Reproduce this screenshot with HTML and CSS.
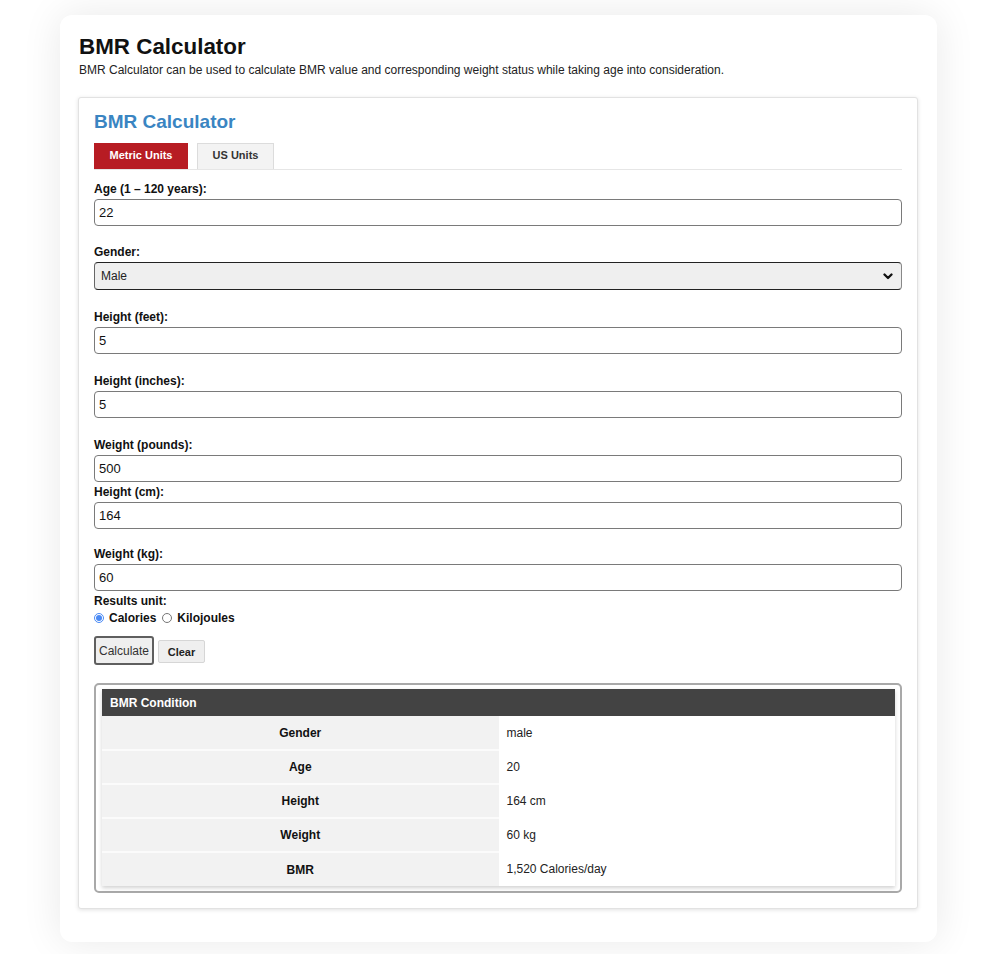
FILE: index.html
```html
<!DOCTYPE html>
<html lang="en">
<head>
<meta charset="utf-8">
<title>BMR Calculator</title>
<link rel="stylesheet" href="styles.css">
</head>
<body>
<div class="card">
  <h1 class="page-title">BMR Calculator</h1>
  <p class="page-desc">BMR Calculator can be used to calculate BMR value and corresponding weight status while taking age into consideration.</p>

  <div class="panel">
    <h2 class="panel-title">BMR Calculator</h2>
    <div class="tabs">
      <span class="tab tab-active">Metric Units</span>
      <span class="tab">US Units</span>
    </div>

    <div class="field field-age">
      <label class="field-label">Age (1 – 120 years):</label>
      <input class="text-input" type="text" value="22">
    </div>

    <div class="field">
      <label class="field-label">Gender:</label>
      <div class="select">
        <span>Male</span>
        <svg class="chev" width="10" height="7" viewBox="0 0 10 7"><path d="M1.5 1.5 L5 5 L8.5 1.5" fill="none" stroke="#111" stroke-width="2.3" stroke-linecap="round" stroke-linejoin="round"/></svg>
      </div>
    </div>

    <div class="field">
      <label class="field-label">Height (feet):</label>
      <input class="text-input" type="text" value="5">
    </div>

    <div class="field">
      <label class="field-label">Height (inches):</label>
      <input class="text-input" type="text" value="5">
    </div>

    <div class="field field-tight">
      <label class="field-label">Weight (pounds):</label>
      <input class="text-input" type="text" value="500">
    </div>

    <div class="field field-cm">
      <label class="field-label">Height (cm):</label>
      <input class="text-input" type="text" value="164">
    </div>

    <div class="field field-tight">
      <label class="field-label">Weight (kg):</label>
      <input class="text-input" type="text" value="60">
    </div>

    <div class="units">
      <div class="field-label">Results unit:</div>
      <div class="radios">
        <label class="radio"><input type="radio" name="u" checked>Calories</label>
        <label class="radio"><input type="radio" name="u">Kilojoules</label>
      </div>
    </div>

    <div class="buttons">
      <button class="btn btn-calc" type="button">Calculate</button>
      <button class="btn btn-clear" type="button">Clear</button>
    </div>

    <div class="results">
      <table class="result-table">
        <thead>
          <tr><th colspan="2">BMR Condition</th></tr>
        </thead>
        <tbody>
          <tr><td class="key">Gender</td><td class="val">male</td></tr>
          <tr><td class="key">Age</td><td class="val">20</td></tr>
          <tr><td class="key">Height</td><td class="val">164 cm</td></tr>
          <tr><td class="key">Weight</td><td class="val">60 kg</td></tr>
          <tr><td class="key">BMR</td><td class="val">1,520 Calories/day</td></tr>
        </tbody>
      </table>
    </div>
  </div>
</div>
</body>
</html>
```

FILE: styles.css
```css
* { box-sizing: border-box; }

html, body { background: #ffffff; }

body {
  margin: 0;
  padding: 15px 44px 13px 60px;
  font-family: "Liberation Sans", Arial, sans-serif;
  color: #222;
}

.card {
  background: #fff;
  border-radius: 12px;
  box-shadow: 0 0 40px rgba(0, 0, 0, 0.09);
  padding: 19px 19px 33px 18px;
}

.page-title {
  margin: 0 0 3px 1px;
  font-size: 22.4px;
  line-height: 26px;
  font-weight: bold;
  color: #111;
}

.page-desc {
  margin: 0 0 20px 1px;
  font-size: 12px;
  line-height: 14px;
  color: #222;
}

.panel {
  background: #fff;
  border: 1px solid #e2e2e2;
  border-radius: 3px;
  box-shadow: 0 1px 4px rgba(0, 0, 0, 0.12);
  padding: 13px 15px 15px 15px;
}

.panel-title {
  margin: 0 0 10px 0;
  font-size: 19px;
  line-height: 22px;
  font-weight: bold;
  color: #3a85c2;
}

.tabs {
  display: flex;
  gap: 9px;
  border-bottom: 1px solid #e6e6e6;
  margin-bottom: 12px;
}

.tab {
  display: flex;
  align-items: center;
  justify-content: center;
  height: 26px;
  width: 77px;
  padding-bottom: 3px;
  font-size: 11px;
  font-weight: bold;
  color: #333;
  background: #f3f3f3;
  border: 1px solid #dcdcdc;
  border-bottom: none;
}

.tab-active {
  width: 94px;
  background: #b71c23;
  border-color: #b71c23;
  color: #fff;
}

.field { margin-bottom: 20px; }
.field-age { margin-bottom: 19px; }
.field-cm { margin-bottom: 18px; }
.field-tight { margin-bottom: 3px; }

.field-label {
  display: block;
  font-size: 12px;
  line-height: 14px;
  font-weight: bold;
  color: #111;
  margin-bottom: 3px;
}

.text-input {
  display: block;
  width: 100%;
  height: 27px;
  border: 1px solid #7a7a7a;
  border-radius: 4px;
  padding: 0 4px;
  font-family: "Liberation Sans", Arial, sans-serif;
  font-size: 13px;
  color: #111;
  background: #fff;
}

.select {
  display: flex;
  align-items: center;
  justify-content: space-between;
  height: 28px;
  border: 1px solid #222;
  border-left-color: #666;
  border-right-color: #888;
  border-radius: 4px;
  background: #efefef;
  padding: 0 8px 0 6px;
  font-size: 12px;
  color: #222;
}

.chev { display: block; }

.units { margin-bottom: 11px; }

.radios {
  display: flex;
  align-items: center;
  gap: 6px;
  height: 14px;
  margin-top: 2px;
}

.radio {
  display: flex;
  align-items: center;
  font-size: 12px;
  font-weight: bold;
  color: #111;
}

.radio input {
  width: 10px;
  height: 10px;
  margin: 0 5px 0 0;
  accent-color: #4a8af4;
}

.buttons {
  display: flex;
  align-items: center;
  gap: 4px;
  margin-bottom: 18px;
}

.btn {
  font-family: "Liberation Sans", Arial, sans-serif;
  background: #efefef;
  color: #333;
  cursor: pointer;
  padding: 0;
}

.btn-calc {
  width: 60px;
  height: 29px;
  border: 2px solid #5f5f5f;
  border-radius: 3px;
  font-size: 12px;
}

.btn-clear {
  width: 47px;
  height: 23px;
  margin-top: 2px;
  border: 1px solid #d6d6d6;
  border-radius: 2px;
  font-size: 11px;
  font-weight: bold;
  color: #222;
}

.results {
  border: 2px solid #a9a9a9;
  border-radius: 5px;
  padding: 4px 5px 5px 6px;
}

.result-table {
  width: 100%;
  border-collapse: collapse;
  box-shadow: 0 2px 4px rgba(0, 0, 0, 0.18);
  font-size: 12px;
}

.result-table th {
  background: #434343;
  color: #fff;
  text-align: left;
  font-weight: bold;
  height: 27px;
  padding: 0 8px;
}

.result-table td {
  height: 34px;
  padding: 0 8px;
  color: #222;
}

.result-table .key {
  width: 50%;
  background: #f2f2f2;
  text-align: center;
  font-weight: bold;
  color: #111;
  border-top: 2px solid #fbfbfb;
}

.result-table tbody tr:first-child .key { border-top: none; }

.result-table .val {
  background: #fff;
}
```
